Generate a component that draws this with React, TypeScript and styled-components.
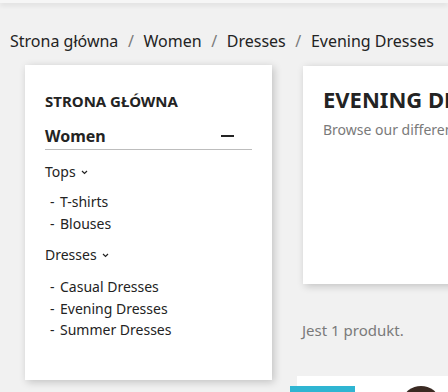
import React from "react";
import styled, { createGlobalStyle } from "styled-components";

const GlobalStyle = createGlobalStyle`
  html, body {
    margin: 0;
    padding: 0;
    background: #f1f1f1;
    font-family: "Noto Sans", "Open Sans", sans-serif;
    color: #232323;
  }
  * { box-sizing: border-box; }
`;

const Page = styled.div`
  width: 448px;
  height: 392px;
  overflow: hidden;
  background: #f1f1f1;
`;

const Header = styled.div`
  height: 3px;
  background: #f6f6f6;
  box-shadow: 0 2px 5px 0 rgba(0, 0, 0, 0.11);
`;

const Breadcrumb = styled.nav`
  display: flex;
  align-items: center;
  gap: 9.6px;
  padding: 24px 0 0 10px;
  height: 52px;
  font-size: 16px;
  white-space: nowrap;
`;

const Crumb = styled.span`
  color: #232323;
`;

const Sep = styled.span`
  color: #7a7a7a;
`;

const Columns = styled.div`
  display: flex;
  gap: 31px;
  padding: 10px 0 0 25px;
`;

const Sidebar = styled.aside`
  flex: 0 0 247px;
  height: 315px;
  background: #fff;
  box-shadow: 2px 2px 8px 0 rgba(0, 0, 0, 0.2);
  padding: 25px 20px;
`;

const TopTitle = styled.div`
  font-size: 15px;
  font-weight: 700;
  text-transform: uppercase;
  line-height: 22px;
`;

const GroupHead = styled.div`
  display: flex;
  align-items: center;
  justify-content: space-between;
  margin-top: 13px;
  padding: 0 18px 2px 0;
  border-bottom: 1px solid #bdbdbd;
  font-size: 16px;
  font-weight: 700;
  line-height: 22px;
`;

const Minus = styled.span`
  width: 13px;
  height: 2px;
  background: #232323;
`;

const SubCat = styled.div<{ $gap: number }>`
  display: flex;
  align-items: center;
  gap: 5px;
  font-size: 14px;
  line-height: 20px;
  margin-top: ${(p) => p.$gap}px;
`;

const ItemList = styled.ul<{ $gap: number }>`
  list-style: none;
  margin: ${(p) => p.$gap}px 0 0;
  padding: 0 0 0 5px;
`;

const Item = styled.li`
  font-size: 14px;
  line-height: 21.5px;
  &::before {
    content: "-";
    display: inline-block;
    width: 10px;
  }
`;

const Main = styled.main`
  flex: 0 0 400px;
  display: flex;
  flex-direction: column;
`;

const CategoryCard = styled.section`
  height: 218px;
  margin-top: 1px;
  background: #fff;
  box-shadow: 2px 2px 8px 0 rgba(0, 0, 0, 0.2);
  padding: 18px 20px;
`;

const CategoryTitle = styled.h1`
  margin: 0;
  font-size: 22px;
  font-weight: 700;
  line-height: 30px;
  text-transform: uppercase;
  white-space: nowrap;
`;

const CategoryText = styled.p`
  margin: 6px 0 0;
  font-size: 14px;
  color: #7a7a7a;
  white-space: nowrap;
`;

const Count = styled.p`
  margin: 36px 0 0 -1px;
  font-size: 15px;
  line-height: 20px;
  color: #7a7a7a;
`;

const ProductCard = styled.div`
  position: relative;
  margin: 36px 0 0 -6px;
  height: 60px;
  background: #fff;
`;

const Badge = styled.span`
  position: absolute;
  left: -7px;
  top: 10px;
  width: 65px;
  height: 30px;
  background: #2fb5d2;
`;

const Photo = styled.svg`
  position: absolute;
  left: 104px;
  top: 9px;
`;

const Chevron = () => (
  <svg width="7" height="5" viewBox="0 0 7 5">
    <path d="M1 1l2.5 2.5L6 1" fill="none" stroke="#232323" strokeWidth="1.2" />
  </svg>
);

export default function App() {
  return (
    <Page>
      <GlobalStyle />
      <Header />
      <Breadcrumb>
        <Crumb>Strona główna</Crumb>
        <Sep>/</Sep>
        <Crumb>Women</Crumb>
        <Sep>/</Sep>
        <Crumb>Dresses</Crumb>
        <Sep>/</Sep>
        <Crumb>Evening Dresses</Crumb>
      </Breadcrumb>
      <Columns>
        <Sidebar>
          <TopTitle>Strona główna</TopTitle>
          <GroupHead>
            Women
            <Minus />
          </GroupHead>
          <SubCat $gap={12}>
            Tops <Chevron />
          </SubCat>
          <ItemList $gap={9}>
            <Item>T-shirts</Item>
            <Item>Blouses</Item>
          </ItemList>
          <SubCat $gap={11}>
            Dresses <Chevron />
          </SubCat>
          <ItemList $gap={11}>
            <Item>Casual Dresses</Item>
            <Item>Evening Dresses</Item>
            <Item>Summer Dresses</Item>
          </ItemList>
        </Sidebar>
        <Main>
          <CategoryCard>
            <CategoryTitle>Evening Dresses</CategoryTitle>
            <CategoryText>Browse our different dresses for every event</CategoryText>
          </CategoryCard>
          <Count>Jest 1 produkt.</Count>
          <ProductCard>
            <Badge />
            <Photo width="40" height="20" viewBox="0 0 40 20">
              <ellipse cx="20" cy="14" rx="17" ry="13" fill="#3a2a22" />
              <ellipse cx="21" cy="19" rx="11" ry="9" fill="#e9c9b4" />
            </Photo>
          </ProductCard>
        </Main>
      </Columns>
    </Page>
  );
}
